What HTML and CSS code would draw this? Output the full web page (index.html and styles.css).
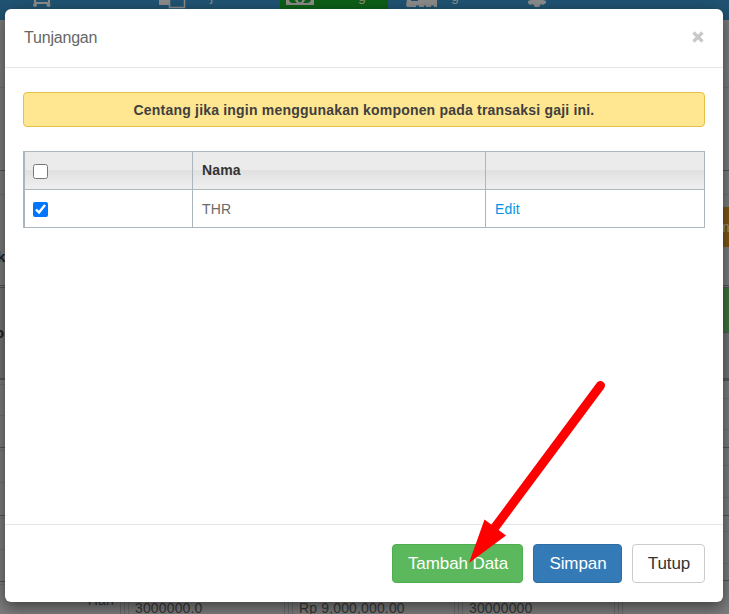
FILE: index.html
```html
<!DOCTYPE html>
<html lang="id">
<head>
<meta charset="utf-8">
<title>Tunjangan</title>
<link rel="stylesheet" href="styles.css">
</head>
<body>
<div class="page">
  <nav class="nav">
    <svg class="nav-icons" width="729" height="20" viewBox="0 0 729 20">
      <path d="M280 0h108v20h-108z" fill="#0d5e16"/>
      <g fill="#8a8a8a">
        <path d="M34 0h2v2h12V0h2v5h-2V4H36v1h-2z"/><circle cx="35" cy="5" r="2"/><circle cx="48.500" cy="5" r="2"/>
        <path d="M159 0h10v5h-10z"/><path d="M169.500-1h15v8.500h-15z" fill="#205372" stroke="#8a8a8a" stroke-width="1.500"/>
        <path d="M286 0h28v5h-28z"/><path d="M289 0h22l-1 2-2 1h-16l-2-1z" fill="#0d5e16"/><circle cx="300" cy="-1" r="5"/><circle cx="300" cy="0" r="2.200" fill="#0d5e16"/>
        <path d="M407 0h30v7h-3V5.500h-3V7h-5V5.500h-2V7h-5V5.500h-3V7h-9l-1-2z"/><path d="M411 0h7v1h-7z" fill="#205372"/>
        <path d="M528 1 531 0h12l3 1v2l-3 2-2-1-2 3h-4l-2-3-3 1-2-2z"/>
      </g>
    </svg>
    <span class="nav-label pelanggan">j</span>
    <span class="nav-label gaji">g</span>
    <span class="nav-label gudang">g</span>
  </nav>
  <div class="sheet">
    <div class="edge left">
      <i class="row h67"></i><i class="row dark h83"></i><i class="row h24"></i>
      <b class="side-text">k</b>
      <i class="row dark h2"></i>
      <b class="side-text shaded">o</b>
      <i class="row h5"></i><i class="row h31"></i><i class="row dark h32"></i><i class="row h3"></i><i class="row h32"></i><i class="row dark h33"></i><i class="row h3"></i><i class="row h31"></i><i class="row dark h32"></i><i class="row h3"></i>
    </div>
    <div class="edge right">
      <i class="row h67"></i><i class="row dark h83"></i><i class="row h24"></i><i class="row none h12"></i>
      <b class="chip">m</b>
      <i class="row dark h38"></i><i class="row dark h2"></i><i class="green"></i><i class="band"></i>
      <i class="row h18"></i><i class="row h31"></i><i class="row dark h18"></i><i class="row h18"></i><i class="row h32"></i><i class="row dark h18"></i><i class="row h16"></i><i class="row h32"></i><i class="row dark h17"></i><i class="row h18"></i>
    </div>
  </div>
  <div class="cells">
    <span class="hari">Hari</span><span class="gap"></span>
    <span class="cell c1">3000000.0</span><span class="gap"></span>
    <span class="cell c2">Rp 9,000,000.00</span><span class="gap"></span>
    <span class="cell c3">30000000</span><span class="gap"></span>
    <span class="cell c4"></span>
  </div>
</div>
<section class="modal" role="dialog">
  <header class="modal-header"><h1>Tunjangan</h1><button class="close" aria-label="Close"><svg width="14" height="14" viewBox="0 0 14 14"><path d="M2.500 2.500 11.500 11.500M11.500 2.500 2.500 11.500" stroke="#c8c8c8" stroke-width="3.200"/></svg></button></header>
  <div class="modal-body">
    <div class="alert">Centang jika ingin menggunakan komponen pada transaksi gaji ini.</div>
    <table>
      <colgroup><col class="w1"><col class="w2"><col class="w3"></colgroup>
      <thead><tr><th><input type="checkbox"></th><th>Nama</th><th></th></tr></thead>
      <tbody><tr><td><input type="checkbox" checked></td><td>THR</td><td><a>Edit</a></td></tr></tbody>
    </table>
  </div>
  <footer class="modal-footer"><button class="btn success">Tambah Data</button><button class="btn primary">Simpan</button><button class="btn plain">Tutup</button></footer>
</section>
<svg class="arrow" width="729" height="614" viewBox="0 0 729 614"><path d="M600.500 385.500 493 530" stroke="red" stroke-width="9" stroke-linecap="round"/><path d="M469 563 484.500 519.500 506 535.500z" fill="red"/></svg>
</body>
</html>
```

FILE: styles.css
```css
* { box-sizing: border-box; }
body { margin: 0; width: 729px; height: 614px; overflow: hidden; position: relative; font: 14px/20px "Liberation Sans", Arial, sans-serif; color: #676a6c; }
.page { height: 614px; background: #7d7d7d; overflow: hidden; display: flex; flex-direction: column; }
.nav { height: 20px; flex: none; background: #205372; position: relative; }
.nav-icons { display: block; }
.nav-label { position: absolute; top: -12px; font-size: 14px; line-height: 16px; color: #8a8a8a; }
.pelanggan { left: 210px; }
.gaji { left: 358px; }
.gudang { left: 451px; }
.sheet { height: 576px; flex: none; display: flex; justify-content: space-between; }
.edge { width: 5px; display: flex; flex-direction: column; overflow: hidden; }
.right { width: 6px; }
.row { flex: none; border-bottom: 1px solid #707070; }
.row.h67 { height: 68px; }
.row.dark { border-color: #555; }
.row.none { border: 0; }
.h2 { height: 2px; } .h3 { height: 3px; } .h5 { height: 5px; } .h12 { height: 12px; } .h16 { height: 16px; }
.h17 { height: 17px; } .h18 { height: 18px; } .h24 { height: 24px; } .h31 { height: 31px; } .h32 { height: 32px; }
.h33 { height: 33px; } .h38 { height: 39px; } .h83 { height: 83px; }
.side-text { flex: none; height: 91px; padding-top: 52px; border-bottom: 1px solid #555; color: #222; font-size: 15px; text-indent: -3px; }
.side-text.shaded { height: 92px; padding-top: 35px; border-bottom: 2px solid #555a5e; background: #747474; text-indent: -5px; }
.chip { flex: none; height: 40px; background: #7f5718; color: #999; font-weight: 400; line-height: 40px; text-indent: -5px; }
.green { flex: none; height: 45px; background: #3d7440; border-bottom: 1px solid #555; }
.band { flex: none; height: 48px; background: #747474; border-bottom: 3px solid #555a5e; }
.cells { flex: none; height: 18px; display: flex; line-height: 18px; color: #363636; font-size: 14px; letter-spacing: .15px; }
.hari { width: 120px; padding-right: 6px; text-align: right; line-height: 9px; }
.gap { width: 5px; border: solid #696969; border-width: 0 1px; }
.cell { border-left: 1px solid #6a6a6a; margin-left: 3px; padding: 3px 0 0 6px; white-space: nowrap; }
.c1 { width: 156px; } .c2 { width: 162px; } .c3 { width: 152px; } .c4 { flex: 1; }
.modal { position: absolute; left: 5px; top: 9px; width: 718px; height: 593px; background: #fff; border-radius: 6px; box-shadow: 0 5px 15px rgba(0,0,0,.5); display: flex; flex-direction: column; }
.modal-header { height: 59px; padding: 18px 18px 18px 19px; display: flex; justify-content: space-between; border-bottom: 1px solid #e5e5e5; }
h1 { margin: 0; font-size: 16px; line-height: 21px; font-weight: 400; color: #666; letter-spacing: -.2px; }
.close { border: 0; padding: 0; width: 14px; height: 20px; background: none; display: flex; align-items: center; }
.modal-body { flex: 1; padding: 24px 18px; }
.alert { height: 35px; border: 1px solid #e5c34b; border-radius: 4px; background: #ffe690; color: #404040; font-weight: 700; line-height: 34px; text-align: center; letter-spacing: .2px; }
table { width: 682px; margin-top: 24px; table-layout: fixed; border-collapse: separate; border-spacing: 0; border: solid #acb7bd; border-width: 1px 0 0 2px; }
.w1 { width: 168px; } .w2 { width: 293px; } .w3 { width: 219px; }
th, td { height: 38px; padding: 0 9px; text-align: left; border: solid #acb7bd; border-width: 0 1px 1px 0; letter-spacing: .15px; }
th { background: linear-gradient(#ebebeb 0 50%, #e1e1e1 50%, #efefef 100%); color: #333; padding-bottom: 1px; }
th:first-child, td:first-child { padding-left: 8px; }
input { display: block; width: 15px; height: 15px; margin: 3px 0 0; accent-color: #0075ff; }
td input { margin-top: 2px; }
a { color: #0095e8; }
.modal-footer { height: 78px; padding: 19px 18px; display: flex; justify-content: flex-end; gap: 10px; border-top: 1px solid #e5e5e5; }
.btn { height: 39px; border: 1px solid; border-radius: 4px; padding: 0 0 0 1px; font: 17px/37px "Liberation Sans", Arial, sans-serif; letter-spacing: -.08px; }
.success { width: 131px; background: #5cb85c; border-color: #4cae4c; color: #fff; }
.primary { width: 89px; background: #337ab7; border-color: #2e6da4; color: #fff; }
.plain { width: 73px; background: #fff; border-color: #ccc; color: #333; }
.arrow { position: absolute; left: 0; top: 0; pointer-events: none; }
```
